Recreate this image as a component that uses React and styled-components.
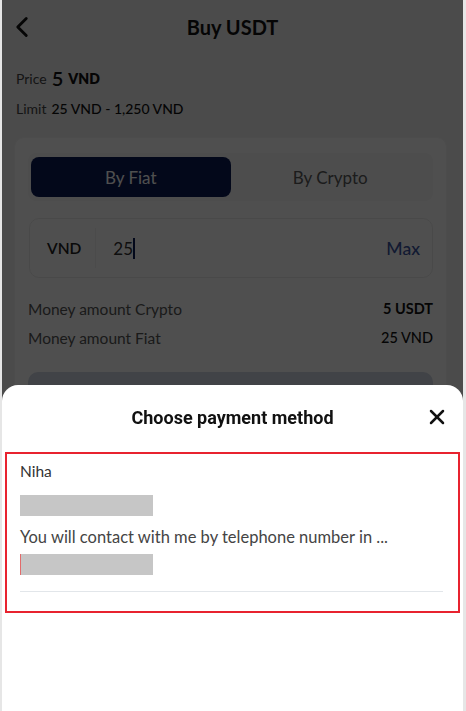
import React from 'react'
import styled, { createGlobalStyle } from 'styled-components'
import { ChevronLeft, X } from 'lucide-react'

const GlobalStyle = createGlobalStyle`
body {
  margin: 0;
  background: #e6e6e6;
  font-family: "Lato", "Noto Sans", sans-serif;
}
`

const Screen = styled.div`
margin: 0 3px 0 2px;
height: 711px;
background: #f2f2f2;
overflow: hidden;
`

const Header = styled.div`
display: grid;
grid-template-columns: 1fr auto 1fr;
align-items: center;
height: 54px;
padding: 0 3px;
`

const BackButton = styled.div`
display: flex;
color: #111;
`

const Title = styled.h1`
margin: 0;
text-align: center;
font-size: 20px;
font-weight: 700;
color: #111;
`

const InfoLine = styled.div`
display: flex;
align-items: center;
gap: 5px;
padding: 0 14px;
font-size: 14px;
color: #444;
height: ${p => p.$h}px;
`

const Strong = styled.span`
color: #111;
font-weight: ${p => p.$w || 600};
font-size: ${p => p.$size || 14}px;
`

const Card = styled.div`
margin: 23px 16px 0 12px;
background: #fff;
border: 1px solid #f4f4f4;
border-radius: 10px;
padding: 15px 13px 20px 13px;
`

const Tabs = styled.div`
display: flex;
padding: 4px 3px;
background: #f7f7f8;
border-radius: 8px;
`

const Tab = styled.div`
flex: 1;
height: 40px;
display: flex;
align-items: center;
justify-content: center;
border-radius: 8px;
font-size: 17px;
background: ${p => (p.$active ? '#0a1a55' : 'transparent')};
color: ${p => (p.$active ? '#fff' : '#5a5a5a')};
`

const InputBox = styled.div`
margin: 17px 0 0 1px;
height: 58px;
display: flex;
align-items: center;
border: 1px solid #ececec;
border-radius: 10px;
padding: 0 12px 0 17px;
`

const Currency = styled.div`
font-size: 15.5px;
font-weight: 600;
color: #222;
padding-right: 14px;
border-right: 1px solid #f0f0f0;
height: 40px;
display: flex;
align-items: center;
`

const Amount = styled.div`
flex: 1;
display: flex;
align-items: center;
padding-left: 17px;
font-size: 17px;
color: #333;
`

const Caret = styled.span`
display: inline-block;
width: 2px;
height: 21px;
background: #0a1a55;
`

const MaxLink = styled.div`
font-size: 17.5px;
color: #3a54a0;
font-weight: 500;
`

const Rows = styled.div`
margin-top: 22px;
display: flex;
flex-direction: column;
gap: 11px;
`

const Row = styled.div`
display: flex;
justify-content: space-between;
font-size: 15.5px;
color: #555;
`

const RowValue = styled.span`
color: #111;
font-size: 14.5px;
font-weight: ${p => (p.$bold ? 700 : 500)};
`

const SubmitButton = styled.div`
margin-top: 25px;
height: 44px;
border-radius: 10px;
background: #d0d8e4;
`

const Dim = styled.div`
position: fixed;
top: 0;
bottom: 0;
left: 2px;
right: 3px;
background: rgba(0, 0, 0, 0.69);
`

const Sheet = styled.div`
position: fixed;
left: 2px;
right: 3px;
bottom: 0;
height: 326px;
background: #fff;
border-radius: 16px 16px 0 0;
`

const SheetHeader = styled.div`
height: 65px;
display: flex;
align-items: center;
justify-content: center;
position: relative;
`

const SheetTitle = styled.div`
font-family: Roboto, "Noto Sans", sans-serif;
font-weight: 700;
font-size: 18px;
color: #111;
`

const CloseButton = styled.div`
position: absolute;
right: 14px;
top: 20px;
display: flex;
color: #111;
`

const MethodBox = styled.div`
margin: 2px 3px 0 3px;
height: 161px;
box-sizing: border-box;
border: 2px solid #e8232f;
padding: 7px 15px 0 13px;
`

const Name = styled.div`
font-size: 15.5px;
color: #333;
line-height: 20px;
`

const Masked = styled.div`
width: 133px;
height: 21px;
background: #c6c6c6;
margin-top: ${p => p.$mt}px;
border-left: ${p => (p.$mark ? '1px solid #e26b6b' : 'none')};
box-sizing: border-box;
`

const Note = styled.div`
margin-top: 10px;
font-size: 16.5px;
color: #444;
line-height: 22px;
`

const Divider = styled.div`
margin-top: 16px;
height: 1px;
background: #e2e6ea;
`

const App = () => {
  return (
    <>
      <GlobalStyle />
      <Screen>
        <Header>
          <BackButton>
            <ChevronLeft size={34} strokeWidth={2} />
          </BackButton>
          <Title>Buy USDT</Title>
        </Header>
        <InfoLine $h={48}>
          Price <Strong $size={20} $w={600}>5</Strong> <Strong $w={800}>VND</Strong>
        </InfoLine>
        <InfoLine $h={12}>
          Limit <Strong $w={500}>25 VND - 1,250 VND</Strong>
        </InfoLine>
        <Card>
          <Tabs>
            <Tab $active>By Fiat</Tab>
            <Tab>By Crypto</Tab>
          </Tabs>
          <InputBox>
            <Currency>VND</Currency>
            <Amount>25<Caret /></Amount>
            <MaxLink>Max</MaxLink>
          </InputBox>
          <Rows>
            <Row>
              <span>Money amount Crypto</span>
              <RowValue $bold>5 USDT</RowValue>
            </Row>
            <Row>
              <span>Money amount Fiat</span>
              <RowValue>25 VND</RowValue>
            </Row>
          </Rows>
          <SubmitButton />
        </Card>
      </Screen>
      <Dim />
      <Sheet>
        <SheetHeader>
          <SheetTitle>Choose payment method</SheetTitle>
          <CloseButton>
            <X size={24} strokeWidth={2.5} />
          </CloseButton>
        </SheetHeader>
        <MethodBox>
          <Name>Niha</Name>
          <Masked $mt={14} />
          <Note>You will contact with me by telephone number in ...</Note>
          <Masked $mt={6} $mark />
          <Divider />
        </MethodBox>
      </Sheet>
    </>
  )
}

export default App
